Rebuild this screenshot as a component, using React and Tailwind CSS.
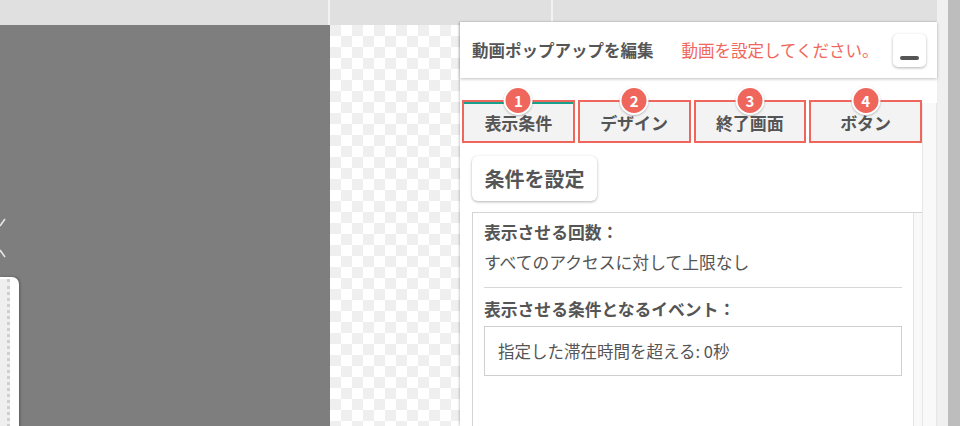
const tabs = [
  { n: 1, label: '表示条件', active: true },
  { n: 2, label: 'デザイン' },
  { n: 3, label: '終了画面' },
  { n: 4, label: 'ボタン' },
]

const font = { fontFamily: '"Noto Sans CJK JP", "Noto Sans", sans-serif' }

function Tab({ tab }) {
  return (
    <div className="relative flex h-[43px] items-center justify-center border-2 border-[#ef665c] bg-[#f3f3f3] pt-[3px] text-[17px] font-bold text-[#555]">
      {tab.active && <div className="absolute inset-x-0 top-0 h-[2px] bg-[#17a08c]" />}
      <div className="absolute -top-[16px] left-1/2 flex h-[29px] w-[29px] -translate-x-1/2 items-center justify-center rounded-full border-2 border-white bg-[#ef665c] text-[15px] font-bold leading-none text-white shadow-[0_1px_2px_rgba(0,0,0,0.25)]">
        {tab.n}
      </div>
      {tab.label}
    </div>
  )
}

export default function App() {
  return (
    <div className="relative flex h-[426px] w-[960px] overflow-hidden bg-white" style={font}>
      <div className="flex flex-1 flex-col">
        <div className="flex h-[25px] bg-[#e0e0e0]">
          <div className="w-[330px] border-r-2 border-[#f2f2f2]" />
          <div className="w-[223px] border-r-2 border-[#f2f2f2]" />
          <div className="flex-1" />
        </div>
        <div className="flex flex-1">
          <div className="relative w-[330px] bg-[#7e7e7e]">
            <svg className="absolute left-0 top-[192px]" width="8" height="50" viewBox="0 0 8 50">
              <polyline points="0,9 5,2" fill="none" stroke="#e6e6e6" strokeWidth="1.6" />
              <polyline points="0,33 5,40" fill="none" stroke="#e6e6e6" strokeWidth="1.6" />
            </svg>
            <div className="absolute left-0 top-[252px] h-[160px] w-[19px] rounded-tr-[7px] bg-white shadow-[1px_0_3px_rgba(0,0,0,0.3)]">
              <div className="mt-[2px] h-full w-[10px] border-r-[3px] border-dotted border-[#cfcfcf] bg-[#efefef]" />
            </div>
          </div>
          <div className="flex-1 bg-[conic-gradient(#ffffff_25%,#efefef_0_50%,#ffffff_0_75%,#efefef_0)] bg-[length:22px_22px]" />
        </div>
      </div>
      <div className="w-[11px] bg-[#f0f0f0]" />
      <div className="w-[12px] bg-[#bdbdbd]" />

      <div className="absolute left-[460px] top-[22px] bottom-0 flex w-[477px] flex-col bg-white shadow-[-1px_0_2px_rgba(0,0,0,0.2)]">
        <div className="relative z-10 flex h-[56px] items-center bg-white pl-[12px] pr-[11px] shadow-[0_1px_3px_rgba(0,0,0,0.25)]">
          <span className="text-[16.5px] font-bold text-[#555]">動画ポップアップを編集</span>
          <span className="ml-[28px] text-[16.5px] text-[#f0665c]">動画を設定してください。</span>
          <button className="ml-auto flex h-[33px] w-[33px] items-end justify-center rounded-[5px] bg-white pb-[7px] shadow-[0_1px_3px_rgba(0,0,0,0.3)]">
            <span className="h-[4px] w-[19px] rounded-[2px] bg-[#555]" />
          </button>
        </div>
        <div className="flex flex-1">
          <div className="flex w-[462px] flex-col pl-[2px] pt-[22px]">
            <div className="grid grid-cols-4 gap-[3px]">
              {tabs.map((t) => <Tab key={t.n} tab={t} />)}
            </div>
            <div className="flex flex-1 flex-col pl-[10px] pt-[13px]">
              <button className="h-[45px] w-[125px] rounded-[6px] bg-white text-[20px] font-bold text-[#555] shadow-[0_1px_3px_rgba(0,0,0,0.3)]">
                条件を設定
              </button>
              <div className="mt-[11px] flex flex-1 border-l border-t border-[#d4d4d4]">
                <div className="flex-1 px-[11px] pt-[6px] text-[16.8px] leading-[26px] text-[#555]">
                  <div className="font-bold">表示させる回数：</div>
                  <div className="mt-[4px]">すべてのアクセスに対して上限なし</div>
                  <div className="mt-[12px] border-t border-[#d8d8d8]" />
                  <div className="mt-[8px] font-bold">表示させる条件となるイベント：</div>
                  <div className="mt-[4px] flex h-[50px] items-center border border-[#cfcfcf] pl-[13px] text-[16.5px]">
                    指定した滞在時間を超える: 0秒
                  </div>
                </div>
                <div className="w-[9px] border-l border-[#e4e4e4] bg-[#f9f9f9]" />
              </div>
            </div>
          </div>
          <div className="mt-[25px] w-[15px] border-x border-[#e6e6e6] bg-[#f9f9f9]" />
        </div>
      </div>
    </div>
  )
}
